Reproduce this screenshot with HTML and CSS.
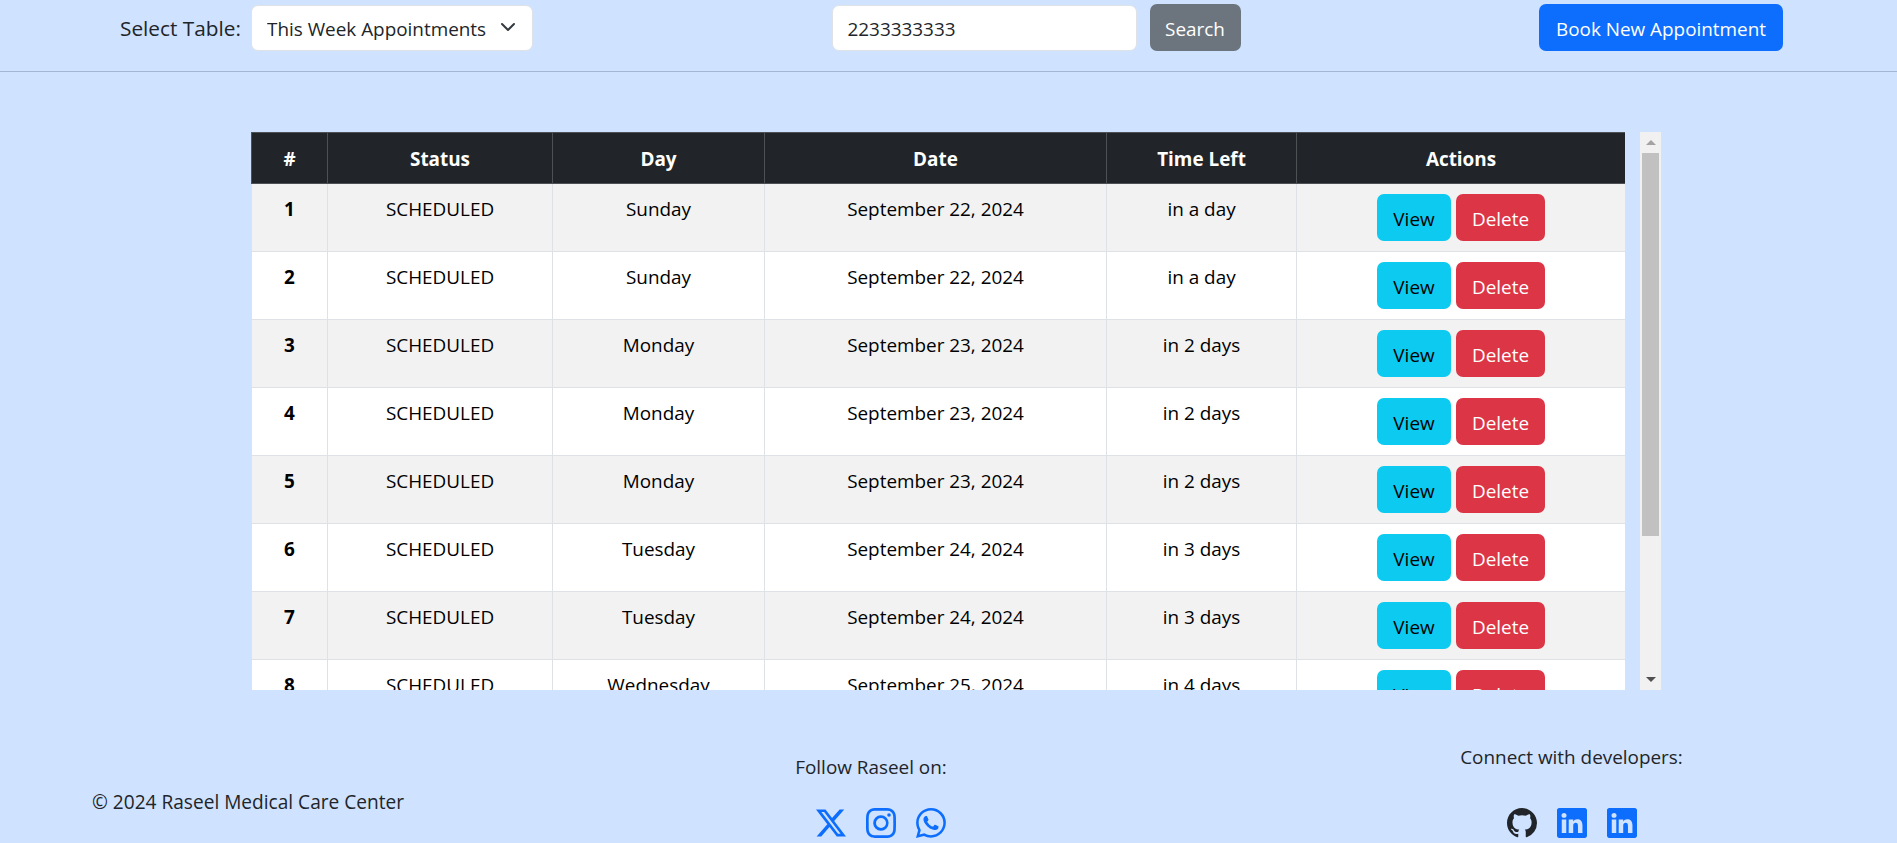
FILE: index.html
```html
<!DOCTYPE html>
<html lang="en">
<head>
  <meta charset="UTF-8">
  <meta name="viewport" content="width=device-width, initial-scale=1.0">
  <title>Raseel Medical Care Center</title>
  <link rel="stylesheet" href="styles.css">
</head>
<body>
  <header class="topbar">
    <div class="table-picker">
      <label for="tableSelect">Select Table:</label>
      <div class="select-box">
        <select id="tableSelect" class="field select-field">
          <option>This Week Appointments</option>
          <option>All Appointments</option>
        </select>
        <svg class="chevron" viewBox="0 0 16 16"><path fill="none" stroke="#343a40" stroke-linecap="round" stroke-linejoin="round" stroke-width="2" d="m2 5 6 6 6-6"/></svg>
      </div>
    </div>
    <form class="search-form">
      <input type="text" class="field search-field" value="2233333333">
      <button type="button" class="btn btn-secondary">Search</button>
    </form>
    <button type="button" class="btn btn-primary">Book New Appointment</button>
  </header>

  <main class="table-frame">
    <div class="table-view">
      <table class="appointments">
        <colgroup>
          <col class="col-num"><col class="col-status"><col class="col-day"><col class="col-date"><col class="col-left"><col class="col-actions">
        </colgroup>
        <thead>
          <tr><th>#</th><th>Status</th><th>Day</th><th>Date</th><th>Time Left</th><th>Actions</th></tr>
        </thead>
        <tbody>
          <tr><th>1</th><td>SCHEDULED</td><td>Sunday</td><td>September 22, 2024</td><td>in a day</td><td class="actions"><button class="btn btn-info">View</button><button class="btn btn-danger">Delete</button></td></tr>
          <tr><th>2</th><td>SCHEDULED</td><td>Sunday</td><td>September 22, 2024</td><td>in a day</td><td class="actions"><button class="btn btn-info">View</button><button class="btn btn-danger">Delete</button></td></tr>
          <tr><th>3</th><td>SCHEDULED</td><td>Monday</td><td>September 23, 2024</td><td>in 2 days</td><td class="actions"><button class="btn btn-info">View</button><button class="btn btn-danger">Delete</button></td></tr>
          <tr><th>4</th><td>SCHEDULED</td><td>Monday</td><td>September 23, 2024</td><td>in 2 days</td><td class="actions"><button class="btn btn-info">View</button><button class="btn btn-danger">Delete</button></td></tr>
          <tr><th>5</th><td>SCHEDULED</td><td>Monday</td><td>September 23, 2024</td><td>in 2 days</td><td class="actions"><button class="btn btn-info">View</button><button class="btn btn-danger">Delete</button></td></tr>
          <tr><th>6</th><td>SCHEDULED</td><td>Tuesday</td><td>September 24, 2024</td><td>in 3 days</td><td class="actions"><button class="btn btn-info">View</button><button class="btn btn-danger">Delete</button></td></tr>
          <tr><th>7</th><td>SCHEDULED</td><td>Tuesday</td><td>September 24, 2024</td><td>in 3 days</td><td class="actions"><button class="btn btn-info">View</button><button class="btn btn-danger">Delete</button></td></tr>
          <tr><th>8</th><td>SCHEDULED</td><td>Wednesday</td><td>September 25, 2024</td><td>in 4 days</td><td class="actions"><button class="btn btn-info">View</button><button class="btn btn-danger">Delete</button></td></tr>
        </tbody>
      </table>
    </div>
    <div class="scrollbar">
      <div class="sb-arrow"><span class="sb-up"></span></div>
      <div class="sb-track"><div class="sb-thumb"></div></div>
      <div class="sb-arrow"><span class="sb-down"></span></div>
    </div>
  </main>

  <footer class="footer">
    <p class="copyright">© 2024 Raseel Medical Care Center</p>
    <div class="social follow">
      <p>Follow Raseel on:</p>
      <div class="icons">
        <svg class="icon" viewBox="0 0 16 16"><path d="M12.6.75h2.454l-5.36 6.142L16 15.25h-4.937l-3.867-5.07-4.425 5.07H.316l5.733-6.57L0 .75h5.063l3.495 4.633L12.601.75Zm-.86 13.028h1.36L4.323 2.145H2.865z"/></svg>
        <svg class="icon" viewBox="0 0 16 16"><path d="M8 0C5.829 0 5.556.01 4.703.048 3.85.088 3.269.222 2.76.42a3.9 3.9 0 0 0-1.417.923A3.9 3.9 0 0 0 .42 2.76C.222 3.268.087 3.85.048 4.7.01 5.555 0 5.827 0 8.001c0 2.172.01 2.444.048 3.297.04.852.174 1.433.372 1.942.205.526.478.972.923 1.417.444.445.89.719 1.416.923.51.198 1.09.333 1.942.372C5.555 15.99 5.827 16 8 16s2.444-.01 3.298-.048c.851-.04 1.434-.174 1.943-.372a3.9 3.9 0 0 0 1.416-.923c.445-.445.718-.891.923-1.417.197-.509.332-1.09.372-1.942C15.99 10.445 16 10.173 16 8s-.01-2.445-.048-3.299c-.04-.851-.175-1.433-.372-1.941a3.9 3.9 0 0 0-.923-1.417A3.9 3.9 0 0 0 13.24.42c-.51-.198-1.092-.333-1.943-.372C10.443.01 10.172 0 7.998 0zm-.717 1.442h.718c2.136 0 2.389.007 3.232.046.78.035 1.204.166 1.486.275.373.145.64.319.92.599s.453.546.598.92c.11.281.24.705.275 1.485.039.843.047 1.096.047 3.231s-.008 2.389-.047 3.232c-.035.78-.166 1.203-.275 1.485a2.5 2.5 0 0 1-.599.919c-.28.28-.546.453-.92.598-.28.11-.704.24-1.485.276-.843.038-1.096.047-3.232.047s-2.39-.009-3.233-.047c-.78-.036-1.203-.166-1.485-.276a2.5 2.5 0 0 1-.92-.598 2.5 2.5 0 0 1-.6-.92c-.109-.281-.24-.705-.275-1.485-.038-.843-.046-1.096-.046-3.233s.008-2.388.046-3.231c.036-.78.166-1.204.276-1.486.145-.373.319-.64.599-.92s.546-.453.92-.598c.282-.11.705-.24 1.485-.276.738-.034 1.024-.044 2.515-.045zm4.988 1.328a.96.96 0 1 0 0 1.92.96.96 0 0 0 0-1.92m-4.27 1.122a4.109 4.109 0 1 0 0 8.217 4.109 4.109 0 0 0 0-8.217m0 1.441a2.667 2.667 0 1 1 0 5.334 2.667 2.667 0 0 1 0-5.334"/></svg>
        <svg class="icon" viewBox="0 0 16 16"><path d="M13.601 2.326A7.85 7.85 0 0 0 7.994 0C3.627 0 .068 3.558.064 7.926c0 1.399.366 2.76 1.057 3.965L0 16l4.204-1.102a7.9 7.9 0 0 0 3.79.965h.004c4.368 0 7.926-3.558 7.93-7.93A7.9 7.9 0 0 0 13.6 2.326zM7.994 14.521a6.6 6.6 0 0 1-3.356-.92l-.24-.144-2.494.654.666-2.433-.156-.251a6.56 6.56 0 0 1-1.007-3.505c0-3.626 2.957-6.584 6.591-6.584a6.56 6.56 0 0 1 4.66 1.931 6.56 6.56 0 0 1 1.928 4.66c-.004 3.639-2.961 6.592-6.592 6.592m3.615-4.934c-.197-.099-1.17-.578-1.353-.646-.182-.065-.315-.099-.445.099-.133.197-.513.646-.627.775-.114.133-.232.148-.43.05-.197-.1-.836-.308-1.592-.985-.59-.525-.985-1.175-1.103-1.372-.114-.198-.011-.304.088-.403.087-.088.197-.232.296-.346.1-.114.133-.198.198-.33.065-.134.034-.248-.015-.347-.05-.099-.445-1.076-.612-1.47-.16-.389-.323-.335-.445-.34-.114-.007-.247-.007-.38-.007a.73.73 0 0 0-.529.247c-.182.198-.691.677-.691 1.654s.71 1.916.81 2.049c.098.133 1.394 2.132 3.383 2.992.47.205.84.326 1.129.418.475.152.904.129 1.246.08.38-.058 1.171-.48 1.338-.943.164-.464.164-.86.114-.943-.049-.084-.182-.133-.38-.232"/></svg>
      </div>
    </div>
    <div class="social connect">
      <p>Connect with developers:</p>
      <div class="icons">
        <svg class="icon icon-dark" viewBox="0 0 16 16"><path d="M8 0C3.58 0 0 3.58 0 8c0 3.54 2.29 6.53 5.47 7.59.4.07.55-.17.55-.38 0-.19-.01-.82-.01-1.49-2.01.37-2.53-.49-2.69-.94-.09-.23-.48-.94-.82-1.13-.28-.15-.68-.52-.01-.53.63-.01 1.08.58 1.23.82.72 1.21 1.87.87 2.33.66.07-.52.28-.87.51-1.07-1.78-.2-3.64-.89-3.64-3.95 0-.87.31-1.59.82-2.15-.08-.2-.36-1.02.08-2.12 0 0 .67-.21 2.2.82.64-.18 1.32-.27 2-.27s1.36.09 2 .27c1.53-1.04 2.2-.82 2.2-.82.44 1.1.16 1.92.08 2.12.51.56.82 1.27.82 2.15 0 3.07-1.87 3.75-3.65 3.95.29.25.54.73.54 1.48 0 1.07-.01 1.93-.01 2.2 0 .21.15.46.55.38A8.01 8.01 0 0 0 16 8c0-4.42-3.58-8-8-8"/></svg>
        <svg class="icon" viewBox="0 0 16 16"><path d="M0 1.146C0 .513.526 0 1.175 0h13.65C15.474 0 16 .513 16 1.146v13.708c0 .633-.526 1.146-1.175 1.146H1.175C.526 16 0 15.487 0 14.854zm4.943 12.248V6.169H2.542v7.225zm-1.2-8.212c.837 0 1.358-.554 1.358-1.248-.015-.709-.52-1.248-1.342-1.248S2.4 3.226 2.4 3.934c0 .694.521 1.248 1.327 1.248zm4.908 8.212V9.359c0-.216.016-.432.08-.586.173-.431.568-.878 1.232-.878.869 0 1.216.662 1.216 1.634v3.865h2.401V9.25c0-2.22-1.184-3.252-2.764-3.252-1.274 0-1.845.7-2.165 1.193v.025h-.016l.016-.025V6.169h-2.4c.03.678 0 7.225 0 7.225z"/></svg>
        <svg class="icon" viewBox="0 0 16 16"><path d="M0 1.146C0 .513.526 0 1.175 0h13.65C15.474 0 16 .513 16 1.146v13.708c0 .633-.526 1.146-1.175 1.146H1.175C.526 16 0 15.487 0 14.854zm4.943 12.248V6.169H2.542v7.225zm-1.2-8.212c.837 0 1.358-.554 1.358-1.248-.015-.709-.52-1.248-1.342-1.248S2.4 3.226 2.4 3.934c0 .694.521 1.248 1.327 1.248zm4.908 8.212V9.359c0-.216.016-.432.08-.586.173-.431.568-.878 1.232-.878.869 0 1.216.662 1.216 1.634v3.865h2.401V9.25c0-2.22-1.184-3.252-2.764-3.252-1.274 0-1.845.7-2.165 1.193v.025h-.016l.016-.025V6.169h-2.4c.03.678 0 7.225 0 7.225z"/></svg>
      </div>
    </div>
  </footer>
</body>
</html>
```

FILE: styles.css
```css
* {
  box-sizing: border-box;
}
html, body {
  height: 843px;
  overflow: hidden;
}
body {
  margin: 0;
  background-color: #cfe2ff;
  color: #212529;
  font-family: "Open Sans", "Noto Sans", Arial, sans-serif;
  font-size: 18.9px;
  line-height: 28.8px;
}
p {
  margin: 0;
}

/* top bar */
.topbar {
  display: flex;
  justify-content: space-between;
  align-items: flex-start;
  height: 72px;
  padding: 4px 114px 0 120px;
  border-bottom: 1px solid #a3b5d0;
}
.table-picker {
  display: flex;
  align-items: center;
  gap: 9px;
  height: 46px;
  margin-top: 1px;
}
.table-picker label {
  width: 122px;
  font-size: 20.8px;
  white-space: nowrap;
}
.select-box {
  position: relative;
  width: 282px;
}
.chevron {
  position: absolute;
  top: 14px;
  right: 17px;
  width: 16px;
  height: 16px;
  pointer-events: none;
}
.field {
  display: block;
  height: 46px;
  padding: 2px 15px 0;
  border: 1px solid #dee2e6;
  border-radius: 7px;
  background-color: #fff;
  color: #212529;
  font: inherit;
}
.select-field {
  width: 100%;
  appearance: none;
}
.search-form {
  display: flex;
  gap: 13px;
  margin: 0;
}
.search-field {
  width: 305px;
  margin-top: 1px;
}
.btn {
  height: 47px;
  padding: 3px 0 0;
  border: 1px solid transparent;
  border-radius: 7px;
  font: inherit;
  cursor: pointer;
}
.btn-primary {
  width: 244px;
  background-color: #0d6efd;
  color: #fff;
}
.btn-secondary {
  width: 91px;
  background-color: #6c757d;
  color: #fff;
}
.btn-info {
  width: 74px;
  background-color: #0dcaf0;
  color: #000;
}
.btn-danger {
  width: 89px;
  margin-left: 5px;
  background-color: #dc3545;
  color: #fff;
}

/* appointments table */
.table-frame {
  display: flex;
  gap: 15px;
  height: 558px;
  margin: 60px 0 0 251px;
}
.table-view {
  width: 1374px;
  overflow: hidden;
}
.appointments {
  width: 1374px;
  table-layout: fixed;
  border-collapse: collapse;
  background-color: #fff;
  color: #000;
  text-align: center;
}
.col-num { width: 76px; }
.col-status { width: 225px; }
.col-day { width: 212px; }
.col-date { width: 342px; }
.col-left { width: 190px; }
.col-actions { width: 329px; }
.appointments th,
.appointments td {
  height: 68px;
  padding: 11px 8px 8px;
  border: 1px solid #dee2e6;
  vertical-align: top;
}
.appointments td.actions {
  padding: 10px 8px;
  white-space: nowrap;
}
.appointments thead th {
  height: 51px;
  padding: 12px 8px 8px;
  border-color: #4d5154;
  background-color: #212529;
  color: #fff;
}
.appointments tbody tr:nth-child(odd) th,
.appointments tbody tr:nth-child(odd) td {
  background-color: #f2f2f2;
}

/* scrollbar of the table */
.scrollbar {
  display: flex;
  flex-direction: column;
  width: 21px;
  background-color: #f1f1f1;
}
.sb-arrow {
  display: flex;
  justify-content: center;
  align-items: center;
  height: 21px;
}
.sb-up {
  border: 5px solid transparent;
  border-top: 0;
  border-bottom-color: #a3a3a3;
}
.sb-down {
  border: 5px solid transparent;
  border-bottom: 0;
  border-top-color: #505050;
}
.sb-track {
  flex: 1;
  padding: 0 2px;
}
.sb-thumb {
  height: 383px;
  background-color: #c1c1c1;
}

/* footer */
.footer {
  display: grid;
  grid-template-columns: 703px 665px auto;
  align-items: end;
  height: 94px;
  margin-top: 53px;
  padding-left: 92px;
}
.copyright {
  margin-bottom: 21px;
  font-size: 19.1px;
}
.social {
  text-align: center;
  white-space: nowrap;
}
.icons {
  display: flex;
  justify-content: center;
  gap: 20px;
}
.follow {
  width: 152px;
}
.follow .icons {
  margin: 26px -20px 0 0;
}
.connect {
  width: 223px;
}
.connect .icons {
  margin-top: 36px;
}
.icon {
  display: block;
  width: 30px;
  height: 30px;
  fill: #0d6efd;
}
.icon-dark {
  fill: #212529;
}
```
